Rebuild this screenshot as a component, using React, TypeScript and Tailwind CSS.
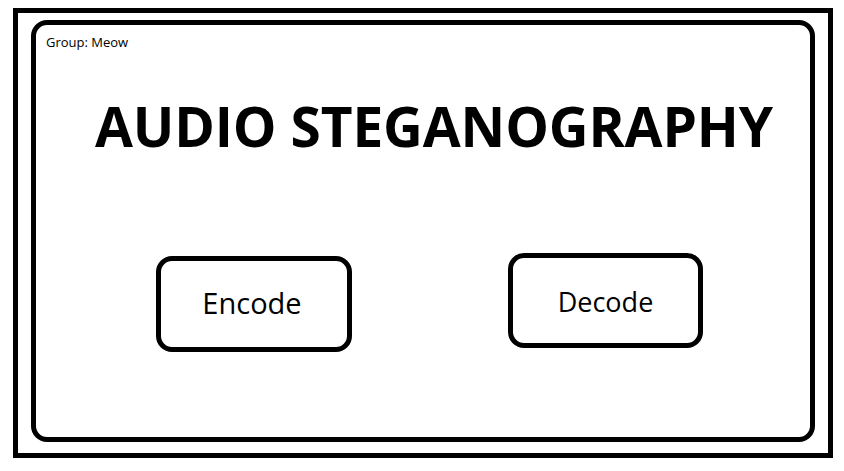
export default function App() {
  return (
    <div className="w-[844px] h-[471px] bg-white pt-[8px] pl-[13px]" style={{ fontFamily: '"Open Sans", "Noto Sans", sans-serif' }}>
      <div className="w-[820px] h-[450px] border-[5px] border-black pt-[7px] pl-[13px] pr-[13px] pb-[11px]">
        <div className="w-full h-full border-[5px] border-black rounded-[16px] flex flex-col">
          <div className="mt-[9px] ml-[10px] text-[13px] leading-[16px] text-black">Group: Meow</div>
          <div className="mt-[48px] ml-[59px] text-[55px] leading-[55px] font-bold text-black whitespace-nowrap tracking-[-0.15px]">
            AUDIO STEGANOGRAPHY
          </div>
          <div className="mt-[100px] flex items-start">
            <div className="ml-[120px] mt-[3px] w-[196px] h-[96px] border-[5px] border-black rounded-[16px] flex items-center justify-center pb-[3px] pr-[4px] text-[29px] text-black">
              Encode
            </div>
            <div className="ml-[156px] w-[195px] h-[95px] border-[5px] border-black rounded-[16px] flex items-center justify-center pt-[4px] text-[27px] text-black">
              Decode
            </div>
          </div>
        </div>
      </div>
    </div>
  );
}
